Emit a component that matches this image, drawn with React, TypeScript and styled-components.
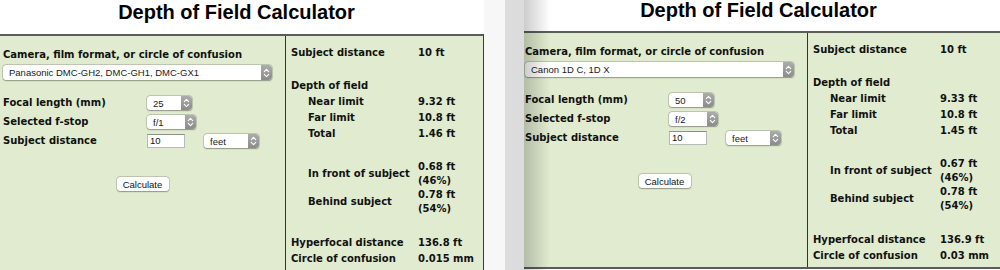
import React from "react";
import styled, { createGlobalStyle, css } from "styled-components";

const Global = createGlobalStyle`
  html, body { margin: 0; padding: 0; background: #fff; }
  body { width: 1000px; height: 270px; overflow: hidden; }
`;

const Frame = styled.div`
  display: flex;
  width: 1000px;
  height: 270px;
  overflow: hidden;
  background: #fff;
`;

const Shot = styled.div<{ $w: number; $shade?: boolean }>`
  position: relative;
  flex: 0 0 ${(p) => p.$w}px;
  height: 270px;
  overflow: hidden;
  ${(p) =>
    p.$shade &&
    css`
      &::after {
        content: "";
        position: absolute;
        left: 0;
        top: 0;
        bottom: 0;
        width: 26px;
        background: linear-gradient(to right, rgba(0, 0, 0, 0.2), rgba(0, 0, 0, 0));
        pointer-events: none;
      }
    `}
`;

const Gutter = styled.div<{ $w: number; $c: string }>`
  flex: 0 0 ${(p) => p.$w}px;
  height: 270px;
  background: ${(p) => p.$c};
`;

const Page = styled.div<{ $dx: number }>`
  width: 484px;
  margin-left: ${(p) => p.$dx}px;
  display: flex;
  flex-direction: column;
`;

const Header = styled.header<{ $h: number }>`
  height: ${(p) => p.$h}px;
  box-sizing: border-box;
  padding-right: 11px;
  display: flex;
  justify-content: center;
  background: #fff;
`;

const Title = styled.h1<{ $lh: number }>`
  margin: 0;
  font: bold 20px/${(p) => p.$lh}px "Liberation Sans", Arial, sans-serif;
  color: #000;
`;

const Panel = styled.div`
  display: grid;
  grid-template-columns: 286px 1fr;
  height: 238px;
  box-sizing: border-box;
  border-top: 2px solid #5c5c5c;
  border-right: 1px solid #3a3a3a;
  border-bottom: 2px solid #5c5c5c;
  background: #e0ebcf;
  font: bold 10px "DejaVu Sans", Verdana, sans-serif;
  color: #111;
`;

const FormCol = styled.div`
  border-right: 1px solid #333;
  padding: 11px 0 0 3px;
  display: flex;
  flex-direction: column;
  align-items: flex-start;
`;

const FieldLabel = styled.div`
  line-height: 16px;
  white-space: nowrap;
`;

const PopUp = styled.div<{ $w: number; $h?: number; $mt?: number }>`
  display: flex;
  align-items: center;
  width: ${(p) => p.$w}px;
  height: ${(p) => p.$h ?? 14}px;
  margin-top: ${(p) => p.$mt ?? 0}px;
  box-sizing: border-box;
  padding-left: 6px;
  background: #fff;
  border-radius: 3px;
  box-shadow: 0 0 0 0.5px rgba(0, 0, 0, 0.22), 0 0.5px 1.5px rgba(0, 0, 0, 0.28);
  font: normal 9.5px "Liberation Sans", Arial, sans-serif;
  color: #1a1a1a;
  overflow: hidden;
`;

const PopText = styled.span`
  flex: 1;
  white-space: nowrap;
`;

const Arrows = styled.span`
  flex: 0 0 11px;
  align-self: stretch;
  display: flex;
  align-items: center;
  justify-content: center;
  background: linear-gradient(#acacac, #8b8b8b);
  border-radius: 0 3px 3px 0;
`;

const FormGrid = styled.div`
  margin-top: 16px;
  display: grid;
  grid-template-columns: 144px auto;
  grid-auto-rows: 14px;
  row-gap: 5px;
  align-items: center;
`;

const Inline = styled.div`
  display: flex;
  align-items: center;
  gap: 19px;
`;

const TextField = styled.div`
  width: 38px;
  height: 14px;
  box-sizing: border-box;
  padding-left: 2px;
  background: #fff;
  border: 1px solid #b9b9b9;
  border-top-color: #8f8f8f;
  font: normal 9.5px/12px "Liberation Sans", Arial, sans-serif;
  color: #111;
`;

const ButtonRow = styled.div`
  align-self: stretch;
  margin-top: 29px;
  padding-right: 3px;
  display: flex;
  justify-content: center;
`;

const Button = styled.div`
  width: 52px;
  height: 14px;
  display: flex;
  align-items: center;
  justify-content: center;
  background: #fff;
  border-radius: 3px;
  box-shadow: 0 0 0 0.5px rgba(0, 0, 0, 0.22), 0 0.5px 1.5px rgba(0, 0, 0, 0.28);
  font: normal 9.5px "Liberation Sans", Arial, sans-serif;
  color: #111;
`;

const Results = styled.div`
  padding: 9px 0 0 5px;
`;

const Row = styled.div<{ $mt?: number }>`
  display: grid;
  grid-template-columns: 127px auto;
  align-items: center;
  margin-top: ${(p) => p.$mt ?? 0}px;
  line-height: 16px;
  white-space: nowrap;
`;

const Label = styled.span<{ $indent?: boolean }>`
  padding-left: ${(p) => (p.$indent ? 17 : 0)}px;
`;

const Value = styled.span<{ $multi?: boolean }>`
  display: flex;
  flex-direction: column;
  line-height: ${(p) => (p.$multi ? 14 : 16)}px;
`;

const Chevrons = () => (
  <svg width="7" height="10" viewBox="0 0 7 10" fill="none">
    <path d="M1.3 3.6 L3.5 1.4 L5.7 3.6" stroke="#fff" strokeWidth="1.1" strokeLinecap="round" strokeLinejoin="round" />
    <path d="M1.3 6.4 L3.5 8.6 L5.7 6.4" stroke="#fff" strokeWidth="1.1" strokeLinecap="round" strokeLinejoin="round" />
  </svg>
);

type Select = { w: number; value: string; h?: number; mt?: number };
const Popup = ({ w, value, h, mt }: Select) => (
  <PopUp $w={w} $h={h} $mt={mt}>
    <PopText>{value}</PopText>
    <Arrows>
      <Chevrons />
    </Arrows>
  </PopUp>
);

type Data = {
  camera: string;
  focal: string;
  stop: string;
  near: string;
  far: string;
  total: string;
  front: [string, string];
  behind: [string, string];
  hyper: string;
  coc: string;
};

const Calculator = ({ d, headH, titleLh }: { d: Data; headH: number; titleLh: number }) => (
  <>
    <Header $h={headH}>
      <Title $lh={titleLh}>Depth of Field Calculator</Title>
    </Header>
    <Panel>
      <FormCol>
        <FieldLabel>Camera, film format, or circle of confusion</FieldLabel>
        <Popup w={269} h={15} mt={2} value={d.camera} />
        <FormGrid>
          <FieldLabel>Focal length (mm)</FieldLabel>
          <Popup w={45} value={d.focal} />
          <FieldLabel>Selected f-stop</FieldLabel>
          <Popup w={49} value={d.stop} />
          <FieldLabel>Subject distance</FieldLabel>
          <Inline>
            <TextField>10</TextField>
            <Popup w={55} value="feet" />
          </Inline>
        </FormGrid>
        <ButtonRow>
          <Button>Calculate</Button>
        </ButtonRow>
      </FormCol>
      <Results>
        <Row>
          <Label>Subject distance</Label>
          <Value>10 ft</Value>
        </Row>
        <Row $mt={17}>
          <Label>Depth of field</Label>
        </Row>
        <Row>
          <Label $indent>Near limit</Label>
          <Value>{d.near}</Value>
        </Row>
        <Row>
          <Label $indent>Far limit</Label>
          <Value>{d.far}</Value>
        </Row>
        <Row>
          <Label $indent>Total</Label>
          <Value>{d.total}</Value>
        </Row>
        <Row $mt={18}>
          <Label $indent>In front of subject</Label>
          <Value $multi>
            <span>{d.front[0]}</span>
            <span>{d.front[1]}</span>
          </Value>
        </Row>
        <Row>
          <Label $indent>Behind subject</Label>
          <Value $multi>
            <span>{d.behind[0]}</span>
            <span>{d.behind[1]}</span>
          </Value>
        </Row>
        <Row $mt={19}>
          <Label>Hyperfocal distance</Label>
          <Value>{d.hyper}</Value>
        </Row>
        <Row>
          <Label>Circle of confusion</Label>
          <Value>{d.coc}</Value>
        </Row>
      </Results>
    </Panel>
  </>
);

const left: Data = {
  camera: "Panasonic DMC-GH2, DMC-GH1, DMC-GX1",
  focal: "25",
  stop: "f/1",
  near: "9.32 ft",
  far: "10.8 ft",
  total: "1.46 ft",
  front: ["0.68 ft", "(46%)"],
  behind: ["0.78 ft", "(54%)"],
  hyper: "136.8 ft",
  coc: "0.015 mm",
};

const right: Data = {
  camera: "Canon 1D C, 1D X",
  focal: "50",
  stop: "f/2",
  near: "9.33 ft",
  far: "10.8 ft",
  total: "1.45 ft",
  front: ["0.67 ft", "(46%)"],
  behind: ["0.78 ft", "(54%)"],
  hyper: "136.9 ft",
  coc: "0.03 mm",
};

export default function App() {
  return (
    <>
      <Global />
      <Frame>
        <Shot $w={484}>
          <Page $dx={0}>
            <Calculator d={left} headH={34} titleLh={24} />
          </Page>
        </Shot>
        <Gutter $w={21} $c="#f7f7f7" />
        <Gutter $w={19} $c="#dcdcdc" />
        <Shot $w={476} $shade>
          <Page $dx={-2}>
            <Calculator d={right} headH={31} titleLh={21} />
          </Page>
        </Shot>
      </Frame>
    </>
  );
}
